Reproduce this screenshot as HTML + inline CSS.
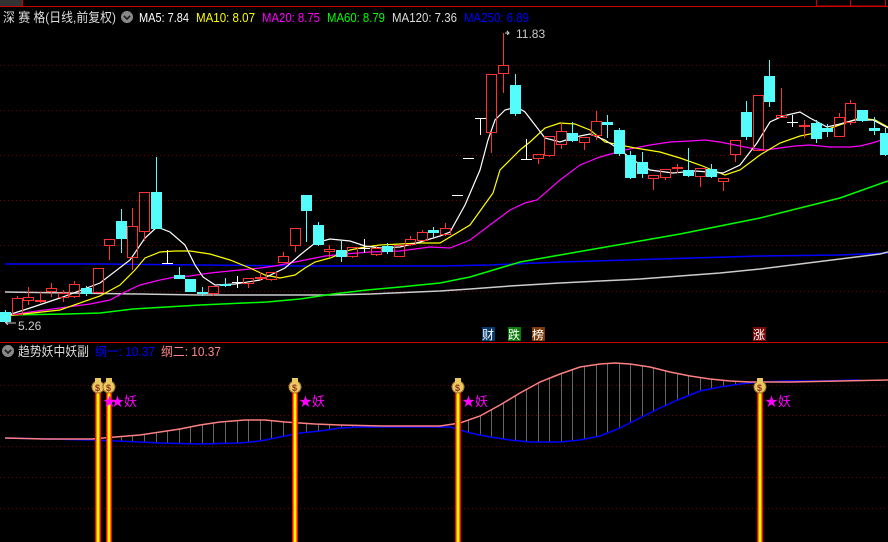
<!DOCTYPE html>
<html><head><meta charset="utf-8"><style>
html,body{margin:0;padding:0;background:#000;width:888px;height:542px;overflow:hidden}
svg{display:block}
text{font-family:"Liberation Sans","Noto Sans CJK SC",sans-serif}
</style></head><body>
<svg id="s" width="888" height="542" xmlns="http://www.w3.org/2000/svg" shape-rendering="crispEdges">
<rect width="888" height="542" fill="#000"/>
<rect x="0" y="0" width="22" height="6" fill="#333"/>
<line x1="22.5" y1="0" x2="22.5" y2="6" stroke="#c00"/>
<line x1="0" y1="6.5" x2="888" y2="6.5" stroke="#c00"/>
<rect x="816.5" y="-1" width="34" height="7" fill="none" stroke="#c00"/>
<rect x="850.5" y="-1" width="35" height="7" fill="none" stroke="#c00"/>
<g stroke="#7a0000" stroke-dasharray="1,3">
<line x1="0" y1="65.5" x2="888" y2="65.5"/><line x1="0" y1="110.5" x2="888" y2="110.5"/>
<line x1="0" y1="155.5" x2="888" y2="155.5"/><line x1="0" y1="200.5" x2="888" y2="200.5"/>
<line x1="0" y1="245.5" x2="888" y2="245.5"/><line x1="0" y1="291.5" x2="888" y2="291.5"/>
<line x1="0" y1="385.5" x2="888" y2="385.5"/><line x1="0" y1="415.5" x2="888" y2="415.5"/>
<line x1="0" y1="446.5" x2="888" y2="446.5"/><line x1="0" y1="477.5" x2="888" y2="477.5"/>
<line x1="0" y1="508.5" x2="888" y2="508.5"/>
</g>
<line x1="0" y1="342.5" x2="888" y2="342.5" stroke="#c00"/>
<text x="3" y="22" font-size="13" fill="#ddd" textLength="113" lengthAdjust="spacingAndGlyphs">深 赛 格(日线,前复权)</text>
<circle cx="127" cy="17" r="6" fill="#888"/><path d="M124 16l3 3 3-3" stroke="#222" stroke-width="1.5" fill="none"/>
<g font-size="12.5">
<text x="139" y="22" fill="#fff" textLength="50" lengthAdjust="spacingAndGlyphs">MA5: 7.84</text>
<text x="196" y="22" fill="#ff0" textLength="59" lengthAdjust="spacingAndGlyphs">MA10: 8.07</text>
<text x="262" y="22" fill="#f0f" textLength="58" lengthAdjust="spacingAndGlyphs">MA20: 8.75</text>
<text x="327" y="22" fill="#0f0" textLength="58" lengthAdjust="spacingAndGlyphs">MA60: 8.79</text>
<text x="392" y="22" fill="#ddd" textLength="65" lengthAdjust="spacingAndGlyphs">MA120: 7.36</text>
<text x="464" y="22" fill="#00f" textLength="65" lengthAdjust="spacingAndGlyphs">MA250: 6.89</text>
</g>
<g id="ma" fill="none" stroke-width="1.3" shape-rendering="auto"></g>
<g id="cd"></g>
<text x="516" y="38" font-size="12" fill="#ccc">11.83</text>
<path d="M505 33h4M507 31l2 2-2 2" stroke="#ccc" fill="none" stroke-width="1"/>
<text x="18" y="330" font-size="12" fill="#ccc">5.26</text>
<path d="M6 323h10M8 321l-2 2 2 2" stroke="#ccc" fill="none" stroke-width="1"/>
<rect x="482" y="327" width="13" height="14" fill="#0a3a6a"/><text x="482" y="339" font-size="12" fill="#fff">财</text>
<rect x="508" y="327" width="13" height="14" fill="#0a7a0a"/><text x="508" y="339" font-size="12" fill="#fff">跌</text>
<rect x="532" y="327" width="13" height="14" fill="#7a3a0a"/><text x="532" y="339" font-size="12" fill="#fff">榜</text>
<rect x="753" y="327" width="13" height="14" fill="#7a0a0a"/><text x="753" y="339" font-size="12" fill="#fff">涨</text>
<circle cx="8" cy="351" r="6" fill="#888"/><path d="M5 350l3 3 3-3" stroke="#222" stroke-width="1.5" fill="none"/>
<text x="18" y="356" font-size="13" fill="#ddd" textLength="71" lengthAdjust="spacingAndGlyphs">趋势妖中妖副</text>
<text x="95" y="356" font-size="12.5" fill="#00f" textLength="60" lengthAdjust="spacingAndGlyphs">纲一: 10.37</text>
<text x="161" y="356" font-size="12.5" fill="#f88" textLength="60" lengthAdjust="spacingAndGlyphs">纲二: 10.37</text>
<g id="ind" shape-rendering="auto"></g>
<g id="pil"></g>
<g font-size="13" fill="#f0f">
<text x="103" y="406">★</text><text x="111" y="406">★妖</text>
<text x="299" y="406">★妖</text>
<text x="462" y="406">★妖</text>
<text x="765" y="406">★妖</text>
</g>
</svg>
<script>
var NS="http://www.w3.org/2000/svg";
function el(p,t,a){var e=document.createElementNS(NS,t);for(var k in a)e.setAttribute(k,a[k]);p.appendChild(e);return e;}
var C=[
['c',312,322,310,323],['r',298,315,296,316],['r',297,301,287,305],['r',300,302,292,303],['r',288,292,283,297],['r',293,298,290,302],['r',284,297,281,298],['c',288,294,286,296],['r',268,293,268,293],['r',239,246,239,260],
['c',221,239,209,253],['r',226,258,208,270],['r',192,232,192,241],['c',192,229,157,229],['w',263,263,250,263],['c',275,279,267,279],['c',279,292,279,292],['c',292,294,287,296],['r',286,294,286,296],['c',284,286,278,287],
['w',282,282,276,288],['r',278,284,278,288],['r',277,279,272,281],['r',272,280,272,281],['r',256,263,252,263],['r',228,246,228,252],['c',195,211,195,242],['c',225,245,222,246],['r',249,252,245,257],['c',250,257,241,262],
['r',247,257,247,258],['w',248,248,239,253],['r',248,255,246,256],['c',246,252,243,254],['r',245,257,245,257],['r',239,245,236,246],['r',232,241,230,241],['c',230,233,227,237],['r',228,235,223,236],['w',195,195,195,195],
['w',158,158,158,158],['w',118,118,118,135],['r',74,133,74,153],['r',65,74,33,93],['c',85,114,74,116],['w',159,159,139,159],['r',154,159,154,164],['r',136,156,136,157],['r',131,145,123,149],['c',133,141,122,142],
['r',137,143,137,150],['r',121,136,111,140],['c',122,125,115,138],['c',130,154,128,156],['c',155,178,151,179],['c',162,174,152,178],['r',175,179,175,190],['r',169,178,169,180],['r',167,169,164,173],['c',170,176,148,177],
['r',168,177,168,187],['c',169,177,164,178],['r',178,182,178,191],['r',140,155,140,162],['c',112,137,101,140],['r',95,151,95,151],['c',76,102,60,107],['r',115,118,88,118],['w',122,122,115,127],['r',125,126,120,137],
['c',123,139,120,143],['c',128,132,124,137],['r',117,137,113,137],['r',103,123,100,125],['c',110,121,110,122],['c',128,131,117,135],['c',133,155,128,156]];
var cd=document.getElementById('cd');
C.forEach(function(c,i){var x=Math.round(5+11.58*i);var t=c[0],top=c[1],bot=c[2],h=c[3],l=c[4];
var col=t=='r'?'#ff3232':t=='c'?'#54fcfc':'#fff';
if(t=='c'){el(cd,'rect',{x:x,y:h,width:1,height:l-h,fill:col});el(cd,'rect',{x:x-5,y:top,width:11,height:Math.max(bot-top,1),fill:col});}
else if(t=='r'){if(bot-top<2){el(cd,'rect',{x:x,y:h,width:1,height:l-h+1,fill:col});el(cd,'rect',{x:x-5,y:top,width:11,height:2,fill:col});}
else{el(cd,'rect',{x:x,y:h,width:1,height:top-h,fill:col});el(cd,'rect',{x:x,y:bot,width:1,height:l-bot,fill:col});el(cd,'rect',{x:x-4.5,y:top+.5,width:10,height:bot-top-1,fill:'none',stroke:col});}}
else{el(cd,'rect',{x:x,y:h,width:1,height:Math.max(l-h,1),fill:col});el(cd,'rect',{x:x-5,y:top,width:11,height:1,fill:col});}
});
function pl(g,pts,col,w){el(g,'polyline',{points:pts.map(function(p){return p.join(',')}).join(' '),stroke:col,'stroke-width':w||1.2,fill:'none'});}
var ma=document.getElementById('ma');
pl(ma,[[5,264],[100,264],[200,265],[300,266],[440,266],[490,265],[560,262],[660,259],[760,256],[840,255],[888,253]],'#0000ff',1.5);
pl(ma,[[5,292],[70,293],[140,294],[200,295],[330,295],[370,294],[440,291],[470,289],[510,286],[560,283],[600,281],[640,279],[680,276],[720,273],[760,269],[800,264],[840,259],[880,254],[888,252]],'#ccc',1.5);
pl(ma,[[5,315],[67,314],[100,313],[133,309],[200,305],[267,302],[300,299],[333,294],[367,290],[400,287],[440,283],[470,277],[500,268],[520,262],[560,255],[600,248],[640,241],[680,234],[720,226],[760,218],[800,208],[840,198],[888,181]],'#00ff00',1.5);
pl(ma,[[5,316],[30,312],[60,308],[90,304],[110,300],[125,292],[140,285],[160,280],[175,277],[190,276],[210,273],[230,271],[260,268],[275,266],[295,262],[310,259],[325,256],[345,254],[370,252],[400,251],[430,247],[450,248],[470,240],[490,225],[510,210],[525,203],[537,200],[560,180],[580,165],[600,157],[625,150],[650,145],[670,142],[690,141],[705,140],[720,142],[735,145],[750,148],[765,150],[780,148],[795,146],[810,145],[830,147],[850,147],[860,146],[872,143],[888,138]],'#ff00ff');
pl(ma,[[5,316],[60,310],[100,296],[120,285],[135,270],[145,258],[160,252],[175,251],[190,251],[210,254],[230,260],[250,268],[265,275],[280,278],[295,275],[305,268],[315,262],[330,258],[350,250],[365,247],[380,245],[400,244],[420,243],[440,243],[470,225],[493,193],[500,170],[510,160],[520,150],[530,142],[545,128],[560,123],[575,124],[590,130],[605,142],[620,145],[635,148],[660,152],[680,158],[700,165],[725,175],[740,170],[760,155],[780,143],[800,136],[820,132],[845,123],[860,118],[875,120],[888,127]],'#ffff00');
pl(ma,[[5,316],[30,308],[60,298],[100,283],[130,260],[145,238],[157,227],[170,232],[185,245],[195,265],[203,277],[215,285],[235,284],[260,280],[285,268],[300,255],[315,243],[330,239],[350,241],[365,246],[380,248],[400,247],[420,242],[440,236],[450,232],[465,205],[480,170],[488,140],[495,120],[505,110],[517,107],[525,112],[535,125],[545,138],[560,142],[575,137],[590,134],[605,140],[620,150],[633,160],[650,170],[673,173],[695,171],[723,173],[740,165],[750,152],[757,143],[770,122],[783,116],[800,112],[810,118],[827,127],[840,124],[855,120],[873,120],[888,128]],'#fff');
var P=[[5,438],[45,439],[92,439],[115,437],[140,435],[160,432],[180,429],[200,425],[220,422],[245,420],[265,420],[285,422],[300,423],[315,424],[340,425],[383,426],[440,426],[460,423],[480,416],[500,405],[520,393],[540,382],[560,374],[580,367],[600,364],[615,363],[630,364],[650,367],[670,372],[690,376],[710,379],[730,381],[750,382],[790,382],[888,380]];
var B=[[5,438],[92,440],[115,441],[140,442],[160,443],[200,444],[240,443],[260,441],[275,438],[290,435],[300,433],[320,431],[340,428],[360,427],[383,427],[450,427],[470,433],[490,437],[510,440],[530,442],[560,442],[580,440],[600,436],[620,428],[640,418],[660,408],[680,399],[700,391],[720,387],[740,384],[760,382],[790,381],[820,381],[860,380]];
function it(a,x){for(var i=0;i<a.length-1;i++){if(x>=a[i][0]&&x<=a[i+1][0]){var f=(x-a[i][0])/(a[i+1][0]-a[i][0]);return a[i][1]+f*(a[i+1][1]-a[i][1]);}}return null;}
var ind=document.getElementById('ind');
for(var i=8;i<76;i++){var x=Math.round(5+11.58*i)+.5;var p=it(P,x),b=it(B,x);if(p!=null&&b!=null&&b-p>2)el(ind,'line',{x1:x,y1:p,x2:x,y2:b,stroke:'#666','stroke-width':1});}
pl(ind,B,'#0000ff',1.5);pl(ind,P,'#ff8080',1.5);
var pil=document.getElementById('pil');
[98,109,295,458,760].forEach(function(x){
el(pil,'rect',{x:x-3,y:392,width:6,height:150,fill:'#ff0000'});
el(pil,'rect',{x:x-1.5,y:392,width:3,height:150,fill:'#ffff00'});
el(pil,'ellipse',{cx:x,cy:387,rx:6,ry:6,fill:'#e8c860',stroke:'#a07020','stroke-width':1});
el(pil,'rect',{x:x-3,y:378,width:6,height:4,fill:'#e8c860'});
var t=el(pil,'text',{x:x-3,y:391,'font-size':9,fill:'#903020','font-weight':'bold'});t.textContent='$';
});
</script>
</body></html>
